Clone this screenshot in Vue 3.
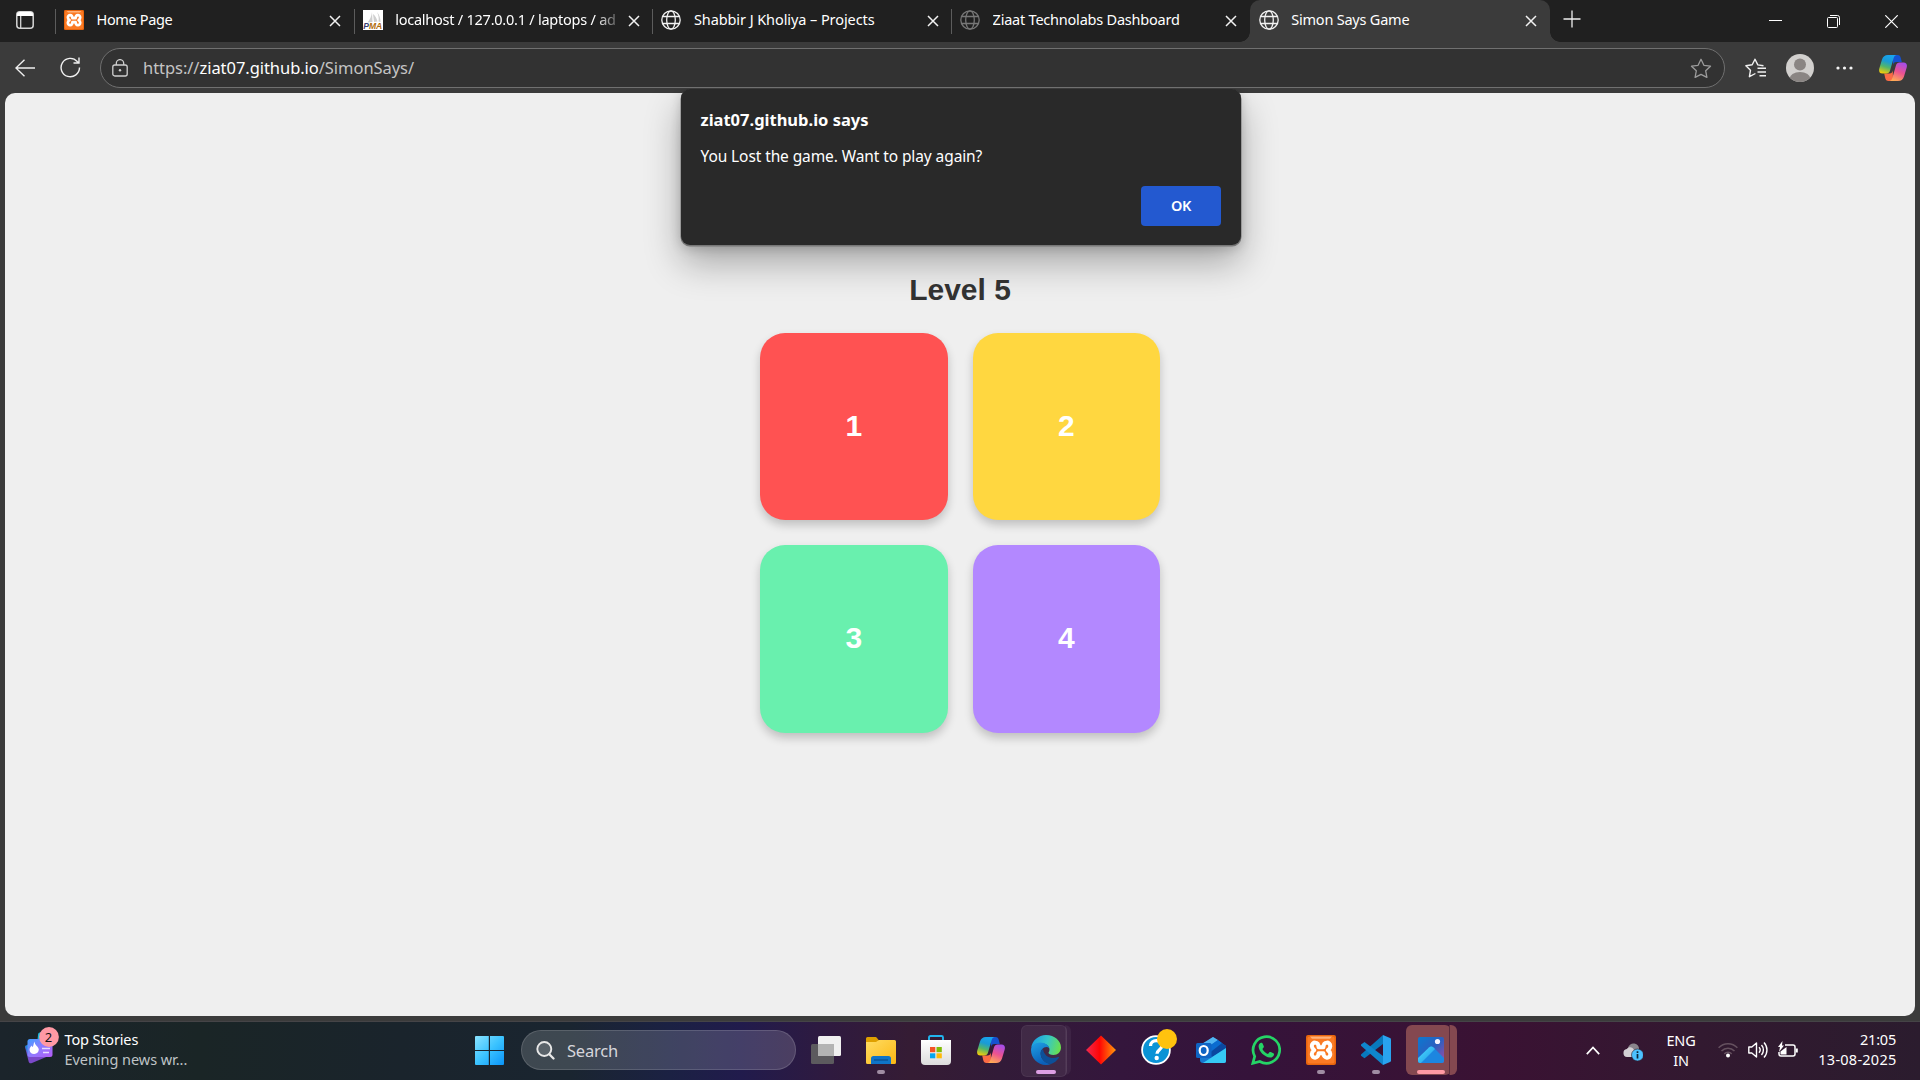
<script setup>
const tabs = [
  { title: 'Home Page', icon: 'xampp', ls: -0.35 },
  { title: 'localhost / 127.0.0.1 / laptops / ad', icon: 'pma', fade: true, ls: -0.24 },
  { title: 'Shabbir J Kholiya – Projects', icon: 'globe', ls: -0.08 },
  { title: 'Ziaat Technolabs Dashboard', icon: 'globe', dim: true, ls: -0.22 },
  { title: 'Simon Says Game', icon: 'globe', active: true, ls: -0.22 },
]
const tiles = [
  { n: 1, c: 'red' },
  { n: 2, c: 'yellow' },
  { n: 3, c: 'green' },
  { n: 4, c: 'purple' },
]
</script>

<template>
  <div class="screen">
    <svg class="defs" width="0" height="0">
      <defs>
        <linearGradient id="cpA" x1=".6" y1="0" x2=".3" y2="1">
          <stop offset="0" stop-color="#18a4ee" /><stop offset=".35" stop-color="#1a9bd5" />
          <stop offset=".65" stop-color="#52b66a" /><stop offset="1" stop-color="#f0cb0c" />
        </linearGradient>
        <linearGradient id="cpB" x1=".7" y1="0" x2=".3" y2="1">
          <stop offset="0" stop-color="#a64de8" /><stop offset=".5" stop-color="#ec5290" />
          <stop offset="1" stop-color="#ffac55" />
        </linearGradient>
        <linearGradient id="winG" x1="0" y1="0" x2="1" y2="1">
          <stop offset="0" stop-color="#8be3ff" /><stop offset=".5" stop-color="#3bc3ff" /><stop offset="1" stop-color="#0a94f8" />
        </linearGradient>
        <linearGradient id="edgeTop" x1="0" y1=".4" x2="1" y2=".6">
          <stop offset="0" stop-color="#1b9de2" /><stop offset=".5" stop-color="#35c6c9" /><stop offset="1" stop-color="#6be04b" />
        </linearGradient>
        <linearGradient id="edgeMid" x1="0" y1="0" x2=".4" y2="1">
          <stop offset="0" stop-color="#1fa0e4" /><stop offset="1" stop-color="#0b5fb8" />
        </linearGradient>
        <linearGradient id="diaG" x1="0" x2="1">
          <stop offset="0" stop-color="#f02a50" /><stop offset=".45" stop-color="#ff0505" /><stop offset="1" stop-color="#ff9a0a" />
        </linearGradient>
        <linearGradient id="foldG" x1="0" y1="0" x2="1" y2="1">
          <stop offset="0" stop-color="#ffdc63" /><stop offset="1" stop-color="#fcb813" />
        </linearGradient>
        <linearGradient id="photoG" x1="0" y1="0" x2="1" y2="1">
          <stop offset="0" stop-color="#0b79d0" /><stop offset=".5" stop-color="#2b5fc0" /><stop offset="1" stop-color="#a44ba0" />
        </linearGradient>
        <linearGradient id="newsG" x1="0" y1="0" x2="1" y2="1">
          <stop offset="0" stop-color="#3f9dff" /><stop offset=".5" stop-color="#8f7bff" /><stop offset="1" stop-color="#b45af5" />
        </linearGradient>
        <linearGradient id="hillG" x1="0" y1="0" x2="1" y2="1">
          <stop offset="0" stop-color="#4fe0ff" /><stop offset="1" stop-color="#1a93e6" />
        </linearGradient>
        <linearGradient id="storeG" x1="0" y1="0" x2="0" y2="1">
          <stop offset="0" stop-color="#ffffff" /><stop offset="1" stop-color="#dcdcdc" />
        </linearGradient>
        <symbol id="xampp" viewBox="0 0 30 30">
          <rect width="30" height="30" rx="2" fill="#e8650d" />
          <rect x="1.500" y="1.500" width="27" height="27" rx="2" fill="#fb7a24" />
          <path d="M4 1.500h22l-2 2.300H6z" fill="#ffb27a" />
          <path d="M12.600 12.300C12.600 6 5.800 6.500 5.800 11.200 5.900 13.300 7 14.300 8.300 15.200 6.800 16.200 5.900 17.200 5.800 19 5.700 24 12.600 24 12.600 18.300H17.400C17.400 24 24.400 24 24.300 19 24.200 17.200 23.300 16.100 21.900 15.200 23.200 14.200 24.300 13.200 24.300 11.200 24.300 6.500 17.400 6 17.400 12.300Z" fill="none" stroke="#fff" stroke-width="4" stroke-linejoin="round" />
        </symbol>
        <symbol id="globe" viewBox="0 0 20 20">
          <g fill="none" stroke="currentColor" stroke-width="1.300">
            <circle cx="10" cy="10" r="9.200" /><ellipse cx="10" cy="10" rx="4.300" ry="9.200" />
            <path d="M1.700 6.500h16.600M1.700 13.500h16.600" />
          </g>
        </symbol>
        <symbol id="copilot" viewBox="0 0 28 26">
          <path d="M14 0h4.500c2 0 2.800 1.200 3.300 3l1 4h-5.500c-2 0-2.800 1-3.300 3z" fill="#1551d0" />
          <path d="M14 26H9.500c-2 0-2.800-1.200-3.300-3L5.200 18.500h5.300c2 0 2.800-1 3.300-3z" fill="#fb6b45" />
          <path d="M9 0h8.500c-1.600.3-2.400 1.500-3 3.500L11.200 15c-.7 2.600-2 3.500-4 3.500H3.500C.5 18.500-.4 16.300.300 13.500L3 4.500C4 1.500 5.800 0 9 0z" fill="url(#cpA)" />
          <path d="M19 26h-8.500c1.600-.3 2.400-1.500 3-3.500L16.800 11c.7-2.600 2-3.500 4-3.500h3.700c3 0 3.900 2.200 3.200 5L25 21.500C24 24.500 22.200 26 19 26z" fill="url(#cpB)" />
        </symbol>
      </defs>
    </svg>

    <header class="tabstrip">
      <div class="workspace">
        <svg width="18" height="18" viewBox="0 0 18 18">
          <rect x=".8" y=".8" width="16.400" height="16.400" rx="3" fill="none" stroke="#d5d5d5" stroke-width="1.500" />
          <path d="M1 5V3.500A2.500 2.500 0 0 1 3.500 1h11A2.500 2.500 0 0 1 17 3.500V5z" fill="#fff" />
          <path d="M4.700 5v12" stroke="#d5d5d5" stroke-width="1.300" />
        </svg>
      </div>
      <div v-for="t in tabs" :key="t.title" class="tab" :class="{ active: t.active }">
        <svg v-if="t.icon === 'xampp'" class="fav" width="20" height="20"><use href="#xampp" /></svg>
        <svg v-else-if="t.icon === 'globe'" class="fav" :class="{ dim: t.dim }" width="20" height="20"><use href="#globe" /></svg>
        <svg v-else class="fav" width="20" height="20" viewBox="0 0 20 20">
          <rect width="20" height="20" fill="#fff" />
          <path d="M9 2c-.5 4-2 8-4.500 10.500L9.500 12zM10 4l1 8 3.500-.5C13.500 8 12 5.500 10 4zM14 2c1.500 3 2 6 1.500 9.500l2 .5C17.500 8 16.500 5 14 2z" fill="#cfcfcf" />
          <text x=".3" y="18.500" font-family="Liberation Sans, sans-serif" font-weight="700" font-style="italic" font-size="8.200" textLength="19" lengthAdjust="spacingAndGlyphs"><tspan fill="#3b3f75">P</tspan><tspan fill="#b06a0a">MA</tspan></text>
        </svg>
        <span class="title" :class="{ fade: t.fade }" :style="{ letterSpacing: t.ls + 'px' }">{{ t.title }}</span>
        <svg class="x" width="12" height="12" viewBox="0 0 12 12"><path d="M1 1l10 10M11 1L1 11" stroke="#f2f2f2" stroke-width="1.500" /></svg>
      </div>
      <svg class="plus" width="18" height="18" viewBox="0 0 18 18"><path d="M9 .5v17M.5 9h17" stroke="#eee" stroke-width="1.300" /></svg>
      <div class="winctl">
        <svg width="13" height="13" viewBox="0 0 13 13"><path d="M0 5.500h13" stroke="#fff" /></svg>
        <svg width="13" height="13" viewBox="0 0 13 13" fill="none" stroke="#fff"><rect x=".5" y="2.500" width="10" height="10" rx="1" /><path d="M3 .5h7.500a2 2 0 0 1 2 2V10" /></svg>
        <svg width="13" height="13" viewBox="0 0 13 13"><path d="M.3.3l12.400 12.400M12.700.3L.3 12.700" stroke="#fff" stroke-width="1.200" /></svg>
      </div>
    </header>

    <nav class="toolbar">
      <svg class="back" width="20" height="18" viewBox="0 0 20 18" fill="none" stroke="#f0f0f0" stroke-width="1.400"><path d="M20 9H.8M9.500.7L.9 9l8.600 8.300" /></svg>
      <svg class="reload" width="21" height="21" viewBox="0 0 21 21" fill="none" stroke="#f0f0f0" stroke-width="1.400"><path d="M19.500 10.500a9.200 9.200 0 1 1-2.300-6L18.700 6M19 .5V6h-5.500" /></svg>
      <div class="address">
        <svg class="lock" width="16" height="18" viewBox="0 0 16 18" fill="none" stroke="#d0d0d0" stroke-width="1.300"><rect x=".8" y="6" width="14.400" height="11" rx="2" /><path d="M4.300 6V4.300a3.700 3.700 0 0 1 7.400 0V6" /><circle cx="8" cy="11.300" r="1.200" fill="#d0d0d0" stroke="none" /></svg>
        <span class="url">https://<b>ziat07.github.io</b>/SimonSays/</span>
        <svg class="star" width="22" height="21" viewBox="0 0 22 21" fill="none" stroke="#9c9c9c" stroke-width="1.300" stroke-linejoin="round"><path d="M11 1.300l2.900 6 6.600.9-4.800 4.600 1.200 6.600L11 16.300l-5.900 3.100 1.200-6.600L1.500 8.200l6.600-.9z" /></svg>
      </div>
      <svg class="favs" width="21" height="20" viewBox="0 0 21 20" fill="none" stroke="#f0f0f0" stroke-width="1.400" stroke-linejoin="round"><path d="M18.500 7.700L12.800 6.900 10 1.200 7.200 6.800.9 7.800l4.600 4.400-1.100 6.500 6-3.200" /><path d="M12.500 10.300H21M12.500 14H21M14.500 17.700H21" /></svg>
      <svg class="avatar" width="28" height="28" viewBox="0 0 28 28"><defs><clipPath id="av"><circle cx="14" cy="14" r="14" /></clipPath></defs><g clip-path="url(#av)"><rect width="28" height="28" fill="#d2d0ce" /><circle cx="14" cy="10.500" r="6" fill="#8a8583" /><ellipse cx="14" cy="25" rx="10.500" ry="7" fill="#8a8583" /></g></svg>
      <svg class="dots" width="17" height="4" viewBox="0 0 17 4" fill="#f4f4f4"><circle cx="2" cy="2" r="1.600" /><circle cx="8.500" cy="2" r="1.600" /><circle cx="15" cy="2" r="1.600" /></svg>
      <svg class="cop" width="28" height="26"><use href="#copilot" /></svg>
    </nav>

    <main class="page">
      <h2 class="level">Level 5</h2>
      <div class="board">
        <button v-for="t in tiles" :key="t.n" class="pad" :class="t.c">{{ t.n }}</button>
      </div>
      <section class="dialog">
        <h1 class="dtitle">ziat07.github.io says</h1>
        <p class="dmsg">You Lost the game. Want to play again?</p>
        <button class="ok">OK</button>
      </section>
    </main>

    <footer class="taskbar">
      <div class="news">
        <svg class="newsicon" width="35" height="38" viewBox="0 0 35 38">
          <path d="M13 8c0-3 3-3 5-3l3 12-9 1z" fill="#17b8d8" />
          <path d="M0 20l26 8-19 8c-2 .7-3 0-3.400-1.500z" fill="#7b49c9" />
          <path d="M0 19l4-2v14z" fill="#2585d8" />
          <rect x="2.500" y="12" width="25" height="18" rx="2.500" fill="url(#newsG)" />
          <path d="M9.500 14.500c0 4 4.500 5 4.300 8.300a4.700 4.700 0 0 1-9.300.2c0-2.300 1.200-2.800 2-4.500.4 1 .8 1.300 1.200 1.500 1-1.500.8-3.300 1.800-5.500z" fill="#fff" />
          <path d="M17 21.500h8M18 25.500h6" stroke="#e8dcff" stroke-width="1.700" />
          <circle cx="24" cy="10" r="9.900" fill="#ff99a4" />
          <text x="23.500" y="14.600" text-anchor="middle" font-family="Noto Sans, sans-serif" font-size="13" fill="#111">2</text>
        </svg>
        <div class="newstext"><span class="n1">Top Stories</span><span class="n2">Evening news wr...</span></div>
      </div>
      <div class="start">
        <svg width="29" height="29" viewBox="0 0 29 29" fill="url(#winG)"><path d="M1 0H13.800V14H0V1a1 1 0 0 1 1-1zM15 0H28a1 1 0 0 1 1 1V14H15zM0 15.100H13.800V29H1a1 1 0 0 1-1-1zM15 15.100H29V28a1 1 0 0 1-1 1H15z" /></svg>
      </div>
      <div class="search">
        <svg width="19" height="19" viewBox="0 0 19 19" fill="none" stroke="#e8e8e8" stroke-linecap="round"><circle cx="8.300" cy="8" r="7" stroke-width="1.900" fill="rgba(255,255,255,.15)" /><path d="M13.300 13.200l4.200 4.300" stroke-width="2.300" /></svg>
        <span>Search</span>
      </div>
      <div class="apps">
        <div class="app"><svg width="30" height="30" viewBox="0 0 30 30"><rect x="0" y="9" width="23" height="20" rx="1.500" fill="#5c5a5e" /><rect x="7" y="1" width="23" height="20" rx="1.500" fill="#f0f0f0" /><path d="M7 9h16v12H8.500A1.500 1.500 0 0 1 7 19.500z" fill="#b3b3b3" /></svg></div>
        <div class="app"><svg width="30" height="30" viewBox="0 0 30 30"><path d="M0 3.500A1.500 1.500 0 0 1 1.500 2H9c1 0 1.500.4 2 1l2 2.500V9H0z" fill="#dfa000" /><path d="M0 7h10l3-2h15.500A1.500 1.500 0 0 1 30 6.500v21a1.500 1.500 0 0 1-1.500 1.500h-27A1.500 1.500 0 0 1 0 27.500z" fill="url(#foldG)" /><path d="M5 29v-5.500a2.500 2.500 0 0 1 2.500-2.500h15a2.500 2.500 0 0 1 2.500 2.500V29z" fill="#0f74c8" /><path d="M8 25h14" stroke="#0a4f90" stroke-width="1.300" /></svg><i class="pip"></i></div>
        <div class="app"><svg width="30" height="30" viewBox="0 0 30 30"><path d="M8 6V2.500Q8 1 9.500 1h11Q22 1 22 2.500V6" fill="none" stroke="#21b5ee" stroke-width="1.900" /><path d="M0 5h30v21a4 4 0 0 1-4 4H4a4 4 0 0 1-4-4z" fill="url(#storeG)" /><path d="M9 12h5.300v5.200H9z" fill="#f35325" /><path d="M15.500 12h5.300v5.200h-5.300z" fill="#81bc06" /><path d="M9 18.300h5.300v5H9z" fill="#05a6f0" /><path d="M15.500 18.300h5.300v5h-5.300z" fill="#ffba08" /></svg></div>
        <div class="app"><svg width="28" height="26"><use href="#copilot" /></svg></div>
        <div class="app edge"><svg width="30" height="30" viewBox="0 0 30 30">
          <path d="M.2 13C1 5.500 7.500 0 15 0c8.700 0 15 6 15 12.500 0 4.500-3.300 7.500-7.500 7.500-3.300 0-5-1.200-5-2.200 0-.8 1-1.200 1-3.300C18.500 11 14.500 8.300 10 8.300 5 8.300 1.500 10.500.2 13z" fill="url(#edgeTop)" />
          <path d="M0 15c0-4.500 4-7.500 9-7.500 5.500 0 9.500 3 9.500 7 0-1.500-1-2.500-3-2.500-3.500 0-5.800 3-5.800 6.800 0 5 4.300 9.700 10.300 10.200-1.500.6-3.200 1-5 1C6.500 30 0 23 0 15z" fill="url(#edgeMid)" />
          <path d="M12 14c-2.500 1.500-2.800 4-2.300 6 1.100 5 5.300 9 10.300 9 3-1 6-3.300 7.900-6.300.3-.6-.2-1-.8-.7-5.500 2.700-14 .5-15.100-8z" fill="#0d4f98" />
        </svg><i class="pip wide"></i></div>
        <div class="app"><svg width="30" height="30" viewBox="0 0 30 30"><path d="M15 .5L30 15 15 29.500 0 15z" fill="url(#diaG)" /></svg></div>
        <div class="app help"><svg width="36" height="36" viewBox="0 0 36 36"><circle cx="15" cy="21" r="13.900" fill="#0a93d6" stroke="#fff" stroke-width="1.800" /><path d="M9.500 17c0-7 11.500-7 11.500-.5 0 4.500-5 4-5 8.300" fill="none" stroke="#fff" stroke-width="3.300" /><circle cx="15.700" cy="29" r="2.200" fill="#fff" /><circle cx="26" cy="10" r="10" fill="#ffc20e" /></svg></div>
        <div class="app"><svg width="30" height="30" viewBox="0 0 30 30"><path d="M4 11L17 2l13 9v15a2 2 0 0 1-2 2H7a3 3 0 0 1-3-3z" fill="#1678d0" /><path d="M4 10L17 2l5 3-13 9z" fill="#51b5f2" /><path d="M22 5l4 3-14 11-3-5z" fill="#0a6cd0" /><path d="M26 8l4 3v3L16 22l-4-3z" fill="#0a48a0" /><path d="M30 13v13a2 2 0 0 1-2 2H7z" fill="#36caf5" /><rect y="8" width="15.500" height="15" rx="1.500" fill="#0f65c4" /><ellipse cx="7.700" cy="15.500" rx="4" ry="4.500" fill="none" stroke="#fff" stroke-width="2.200" /></svg></div>
        <div class="app"><svg width="30" height="30" viewBox="0 0 30 30"><path d="M1.800 28.300L3.700 21.300A13.300 13.300 0 1 1 8.800 26.500z" fill="none" stroke="#25d366" stroke-width="2.700" /><path d="M10 7.800c.8-.2 1.300 0 1.600.7l1.200 2.800c.2.500 0 1-.4 1.500l-1 1.200c1.300 2.400 3.200 4 5.600 5l1.400-1.700c.4-.5.8-.5 1.300-.3l2.700 1.300c.6.300.8.700.6 1.400-.5 2-2.300 2.900-4 2.800-5.700-.6-11.200-6.200-11.400-11.100 0-1.700 1-3.300 2.400-3.600z" fill="#25d366" /></svg></div>
        <div class="app"><svg width="30" height="30"><use href="#xampp" /></svg><i class="pip"></i></div>
        <div class="app"><svg width="30" height="30" viewBox="0 0 30 30"><path d="M22 0v9L3.500 23.300 0 20.700v-1.200z" fill="#0879bd" /><path d="M22 0l7 3a1.700 1.700 0 0 1 1 1.500v21a1.700 1.700 0 0 1-1 1.500l-7 3z" fill="#29a3ef" /><path d="M0 9.500L3.500 7 22 21v9L0 10.700z" fill="#0f86cd" /></svg><i class="pip"></i></div>
        <div class="app photos"><svg width="26" height="26" viewBox="0 0 26 26"><rect width="26" height="26" rx="2" fill="url(#photoG)" /><path d="M3 26L11 10.500c1.500-1.400 3-1.400 4.500 0L26 21v3a2 2 0 0 1-2 2z" fill="#1c86e0" /><path d="M0 21L11 10.500c1.500-1.400 3-1.400 4.500 0L17 12 3 26H2a2 2 0 0 1-2-2z" fill="url(#hillG)" /><circle cx="19.500" cy="4.500" r="2.600" fill="#f4f4ff" /></svg><i class="pip sel"></i></div>
      </div>
      <div class="tray">
        <svg class="chev" width="14" height="9" viewBox="0 0 14 9" fill="none" stroke="#fff" stroke-width="1.700"><path d="M.8 8.200L7 1.500l6.200 6.700" /></svg>
        <svg class="cloud" width="20" height="18" viewBox="0 0 20 18"><path d="M5 4.500C6.500 1 9 0 11.500.5c3 .5 4.500 3 4.500 5v5H6z" fill="#8a858c" /><path d="M4 14a4 4 0 0 1-.3-7.900C6 3 10 4 11 7l5 4v3z" fill="#d3d0d4" /><circle cx="14.500" cy="12" r="6" fill="#4cc2ff" stroke="#28202f" stroke-width=".6" /><path d="M14.500 11v4.500M14.500 8.300v1.600" stroke="#0b2a3c" stroke-width="1.700" /></svg>
        <div class="lang"><span>ENG</span><span>IN</span></div>
        <svg class="wifi" width="20" height="16" viewBox="0 0 20 16" fill="none" stroke="#65515f" stroke-width="1.500"><path d="M.6 5.800a13 13 0 0 1 18.800 0M3.500 9a9 9 0 0 1 13 0M6.300 11.900a5.200 5.200 0 0 1 7.400 0" /><circle cx="10" cy="13.500" r="2" fill="#fff" stroke="none" /></svg>
        <svg class="vol" width="20" height="18" viewBox="0 0 20 18" fill="none" stroke="#fff" stroke-width="1.400"><path d="M.8 6h3L8.500 2v14l-4.700-4h-3z" stroke-linejoin="round" /><path d="M11 6.300a4 4 0 0 1 0 5.400M13.500 4a7.500 7.500 0 0 1 0 10M16 1.500a11 11 0 0 1 0 15" /></svg>
        <svg class="bat" width="20" height="17" viewBox="0 0 20 17" fill="none" stroke="#fff" stroke-width="1.500"><path d="M7 4h8a2 2 0 0 1 2 2v7a2 2 0 0 1-2 2H3a2 2 0 0 1-2-2v-2" /><path d="M18.800 7.500v4" stroke-width="2" /><path d="M2.500 13.500v-3L8.500 6v7.500z" fill="#fff" stroke="none" /><path d="M4.500 0L0 6h2L1 11l5-6.500H4z" fill="#fff" stroke="none" /></svg>
        <div class="clock"><span>21:05</span><span class="date">13-08-2025</span></div>
      </div>
    </footer>
  </div>
</template>

<style>
body { margin: 0; overflow: hidden; }
</style>

<style scoped>
* { box-sizing: border-box; }
.screen { width: 1920px; height: 1080px; display: flex; flex-direction: column; background: #3b3b3b; font-family: "Noto Sans", "Open Sans", sans-serif; color: #fff; overflow: hidden; }
.defs { position: absolute; }
svg { display: block; flex: none; }
.tabstrip { height: 42px; flex: none; background: #202020; display: flex; align-items: flex-start; }
.workspace { width: 55px; padding: 11px 0 0 16px; }
.tab { width: 298.700px; height: 42px; display: flex; align-items: flex-start; padding: 10px 12.500px 0 9px; background: linear-gradient(#5c5c5c, #5c5c5c) 0 9px / 1px 25px no-repeat; }
.tab.active { background: #3b3b3b; border-radius: 10px 10px 0 0; width: 300px; padding-right: 13px; }
.tab.active::before, .tab.active::after { content: ""; width: 10px; height: 10px; position: absolute; top: 32px; }
.tab.active::before { left: 1240px; background: radial-gradient(circle at 0 0, transparent 9.500px, #3b3b3b 10px); }
.tab.active::after { left: 1550px; background: radial-gradient(circle at 100% 0, transparent 9.500px, #3b3b3b 10px); }
.fav { color: #f2f2f2; }
.fav.dim { color: #777; }
.title { flex: 1; margin: -1px 0 0 12.500px; font-size: 14.500px; line-height: 20px; white-space: nowrap; overflow: hidden; }
.title.fade { margin-right: 8px; -webkit-mask-image: linear-gradient(90deg, #000 89%, rgba(0, 0, 0, .15) 100%); mask-image: linear-gradient(90deg, #000 89%, rgba(0, 0, 0, .15) 100%); }
.x { margin-top: 4.500px; }
.plus { margin: 10px 0 0 13.500px; }
.winctl { margin-left: auto; display: flex; gap: 45px; padding: 15px 22px 0 0; }
.toolbar { height: 51px; flex: none; display: flex; align-items: center; padding: 0 13px 0 15px; background: #3b3b3b; }
.toolbar > svg { margin-top: 0; }
.reload { margin-left: 25px; }
.address { margin-left: 19px; width: 1625px; height: 40px; margin-top: 1px; border: 1px solid #707070; border-radius: 20px; background: #323232; display: flex; align-items: center; padding: 0 12px 0 11px; }
.lock { margin-top: -1px; }
.url { margin: -2px 0 0 15px; font-size: 16.500px; letter-spacing: -0.050px; color: #c4c4c4; }
.url b { font-weight: 400; color: #fff; }
.star { margin-left: auto; }
.favs { margin-left: 20px; }
.avatar { margin-left: 20px; }
.dots { margin-left: 22px; }
.cop { margin-left: auto; }
.page { position: relative; height: 923px; flex: none; margin: 0 5px; background: #efefef; border-radius: 10px; display: flex; flex-direction: column; align-items: center; }
.level { margin: 179px 0 25.750px; font: 700 30px/35px "Liberation Sans", Arial, sans-serif; color: #333; }
.board { display: grid; grid-template-columns: 187.500px 187.500px; grid-auto-rows: 187.500px; gap: 25px; }
.pad { border: 0; border-radius: 25px; padding: 0 0 2px; color: #fff; font: 700 30px "Liberation Sans", Arial, sans-serif; box-shadow: 0 5px 10px rgba(0, 0, 0, .2); }
.red { background: #ff5252; }
.yellow { background: #ffd740; }
.green { background: #69f0ae; }
.purple { background: #b388ff; }
.dialog { position: absolute; left: 676px; top: -4px; width: 559.500px; height: 156px; border-radius: 9px; background: #292929; box-shadow: 0 1px 0 .5px #777, 0 18px 36px rgba(0, 0, 0, .3), 0 3px 12px rgba(0, 0, 0, .18); padding: 19px 19.500px 0 19.500px; clip-path: inset(0 -80px -80px -80px); display: flex; flex-direction: column; }
.dtitle { margin: 0; font-size: 16.500px; line-height: 24px; font-weight: 700; letter-spacing: 0; white-space: nowrap; }
.dmsg { margin: 12px 0 0; font-size: 15.500px; line-height: 24px; letter-spacing: -0.100px; white-space: nowrap; }
.ok { align-self: flex-end; margin-top: 18px; width: 80px; height: 40px; border: 0; border-radius: 4px; padding: 0 0 2px; background: #2359d0; color: #fff; font: 600 14.500px "Noto Sans", sans-serif; letter-spacing: -0.300px; }
.taskbar { margin-top: auto; height: 59px; display: flex; align-items: center; border-top: 1px solid #454447; background: linear-gradient(90deg, #1b242b 0, #1a2526 200px, #1a242c 400px, #1a2530 570px, #1b2143 670px, #211b4c 740px, #2f1a3f 830px, #351c34 910px, #321b38 1000px, #34163c 1120px, #35133a 1250px, #3a1233 1500px, #321930 1700px, #2b1c2e 1920px); }
.news { width: 450px; padding-left: 25px; display: flex; height: 58px; }
.newsicon { margin-top: 5px; }
.newstext { display: flex; flex-direction: column; margin: 7px 0 0 4.500px; font-size: 14.500px; line-height: 20px; letter-spacing: -0.150px; }
.n2 { color: #bfc3c6; letter-spacing: -0.050px; }
.start { width: 71px; padding-left: 25px; margin-top: -1px; }
.search { width: 275px; height: 40px; margin-top: -2px; border-radius: 20px; background: rgba(255, 255, 255, .16); border: 1px solid rgba(255, 255, 255, .14); display: flex; align-items: center; padding-left: 14px; font-size: 16.500px; color: #d6d6dc; letter-spacing: -0.200px; }
.search span { margin-left: 12px; }
.apps { display: flex; margin-left: 2.500px; height: 58px; }
.app { width: 55px; height: 58px; display: flex; align-items: center; justify-content: center; position: relative; }
.app svg { position: relative; margin-top: -2px; }
.help svg { margin: -8px 0 0 6px; }
.pip { position: absolute; bottom: 6px; left: 23.500px; width: 8px; height: 4px; border-radius: 2px; background: #a08da3; }
.pip.wide { left: 17.500px; width: 20px; background: #dd9fe4; }
.pip.sel { left: 13.500px; width: 28px; background: #ff99a4; }
.edge::before, .photos::before, .edge::after, .photos::after { content: ""; position: absolute; top: 3px; height: 50px; border-radius: 6px; }
.edge::before { left: 2.500px; width: 44px; background: rgba(255, 255, 255, .07); border: 1px solid rgba(255, 255, 255, .05); }
.edge::after { left: 46.500px; width: 6px; border-radius: 0 6px 6px 0; background: rgba(255, 255, 255, .05); }
.photos::before { left: 2.500px; width: 45px; background: #844850; }
.photos::after { left: 45px; width: 7.500px; border-radius: 0 6px 6px 0; background: #844850; border-left: 1px solid #5a2b3c; }
.tray { margin-left: auto; display: flex; align-items: center; padding-right: 24px; font-size: 14.500px; line-height: 20px; letter-spacing: -0.200px; }
.chev { margin-top: -2px; }
.cloud { margin: 2px 0 0 23px; }
.lang { display: flex; flex-direction: column; align-items: center; width: 32px; margin: -2px 0 0 22px; }
.wifi { margin: -3px 0 0 21px; }
.vol { margin-left: 10px; margin-top: -2px; }
.bat { margin-left: 10px; margin-top: -4px; }
.clock { display: flex; flex-direction: column; align-items: flex-end; width: 98px; margin-top: -4px; }
.date { letter-spacing: 0.250px; margin-right: -0.500px; }
</style>
